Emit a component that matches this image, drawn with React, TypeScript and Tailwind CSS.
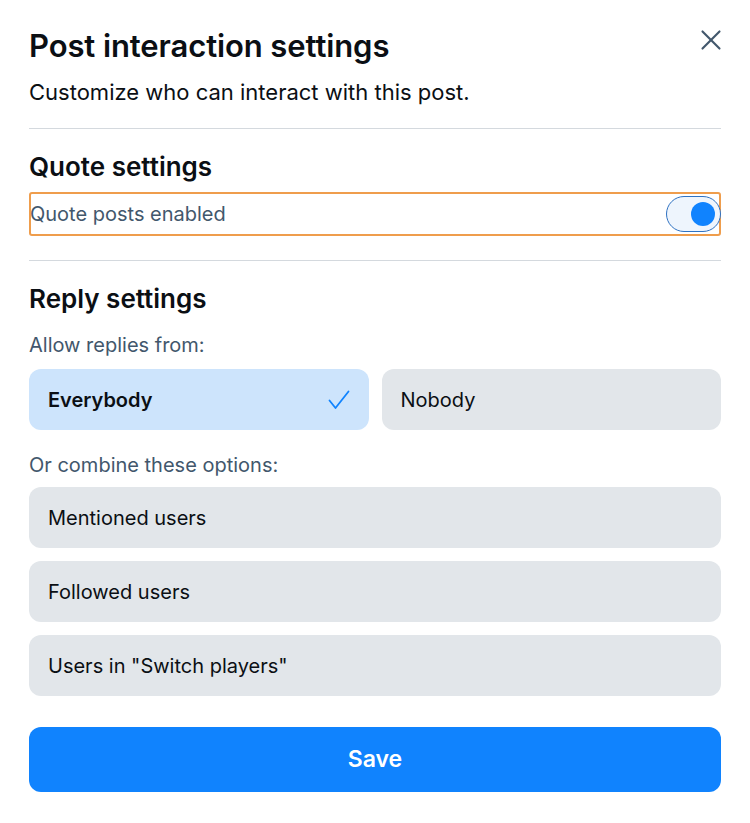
import { X } from 'lucide-react';

const options = ['Mentioned users', 'Followed users', 'Users in "Switch players"'];

export default function App() {
    return (
        <div className="min-h-screen bg-white font-['Inter',sans-serif] text-[#0b0f14]">
            <div className="px-[29px] pt-[27px] pb-[30px]">
                {/* Header */}
                <div className="flex items-start justify-between">
                    <div>
                        <h1 className="text-[31px] font-semibold leading-[38px] tracking-[-0.1px]">
                            Post interaction settings
                        </h1>
                        <p className="mt-[13px] text-[22px] leading-[28px]">
                            Customize who can interact with this post.
                        </p>
                    </div>
                    <button className="mt-[-4px] mr-[-7px] text-[#42576c]">
                        <X size={34} strokeWidth={1.5} />
                    </button>
                </div>

                <div className="mt-[22px] h-px bg-[#d4d9de]" />

                {/* Quote settings */}
                <h2 className="mt-[22px] text-[26px] font-semibold leading-[32px]">Quote settings</h2>
                <div className="mt-[9px] flex h-[44px] items-center justify-between rounded-[3px] border-2 border-[#ef9d4c]">
                    <span className="ml-[-1px] text-[20px] leading-[28px] text-[#42576c]">Quote posts enabled</span>
                    <div className="mr-[-2px] flex h-[36px] w-[55px] items-center justify-end rounded-full border-[1.5px] border-[#2f72c2] bg-[#eef5fd] pr-[5px]">
                        <div className="h-[24px] w-[24px] rounded-full bg-[#1083fe]" />
                    </div>
                </div>

                <div className="mt-[24px] h-px bg-[#d4d9de]" />

                {/* Reply settings */}
                <h2 className="mt-[22px] text-[26px] font-semibold leading-[32px]">Reply settings</h2>
                <p className="mt-[17px] text-[20px] leading-[26px] text-[#42576c]">Allow replies from:</p>

                <div className="mt-[11px] grid grid-cols-2 gap-[13px]">
                    <button className="flex h-[61px] items-center justify-between rounded-[12px] bg-[#cde4fc] pl-[19px] pr-[18px] text-left">
                        <span className="text-[20px] font-semibold">Everybody</span>
                        <svg
                            width="24"
                            height="24"
                            viewBox="0 0 24 24"
                            fill="none"
                            stroke="#1083fe"
                            strokeWidth="1.8"
                            strokeLinecap="round"
                            strokeLinejoin="round"
                        >
                            <path d="M2.5 12.5 8.5 20 21.5 3.5" />
                        </svg>
                    </button>
                    <button className="flex h-[61px] items-center rounded-[12px] bg-[#e2e6ea] px-[19px] text-left">
                        <span className="text-[20px]">Nobody</span>
                    </button>
                </div>

                <p className="mt-[22px] text-[20px] leading-[26px] text-[#42576c]">Or combine these options:</p>

                <div className="mt-[9px] flex flex-col gap-[13px]">
                    {options.map((option) => (
                        <button
                            key={option}
                            className="flex h-[61px] items-center rounded-[12px] bg-[#e2e6ea] px-[19px] text-left"
                        >
                            <span className="text-[20px]">{option}</span>
                        </button>
                    ))}
                </div>

                <button className="mt-[31px] flex h-[65px] w-full items-center justify-center rounded-[12px] bg-[#1083fe] text-[23px] font-semibold text-white">
                    Save
                </button>
            </div>
        </div>
    );
}
